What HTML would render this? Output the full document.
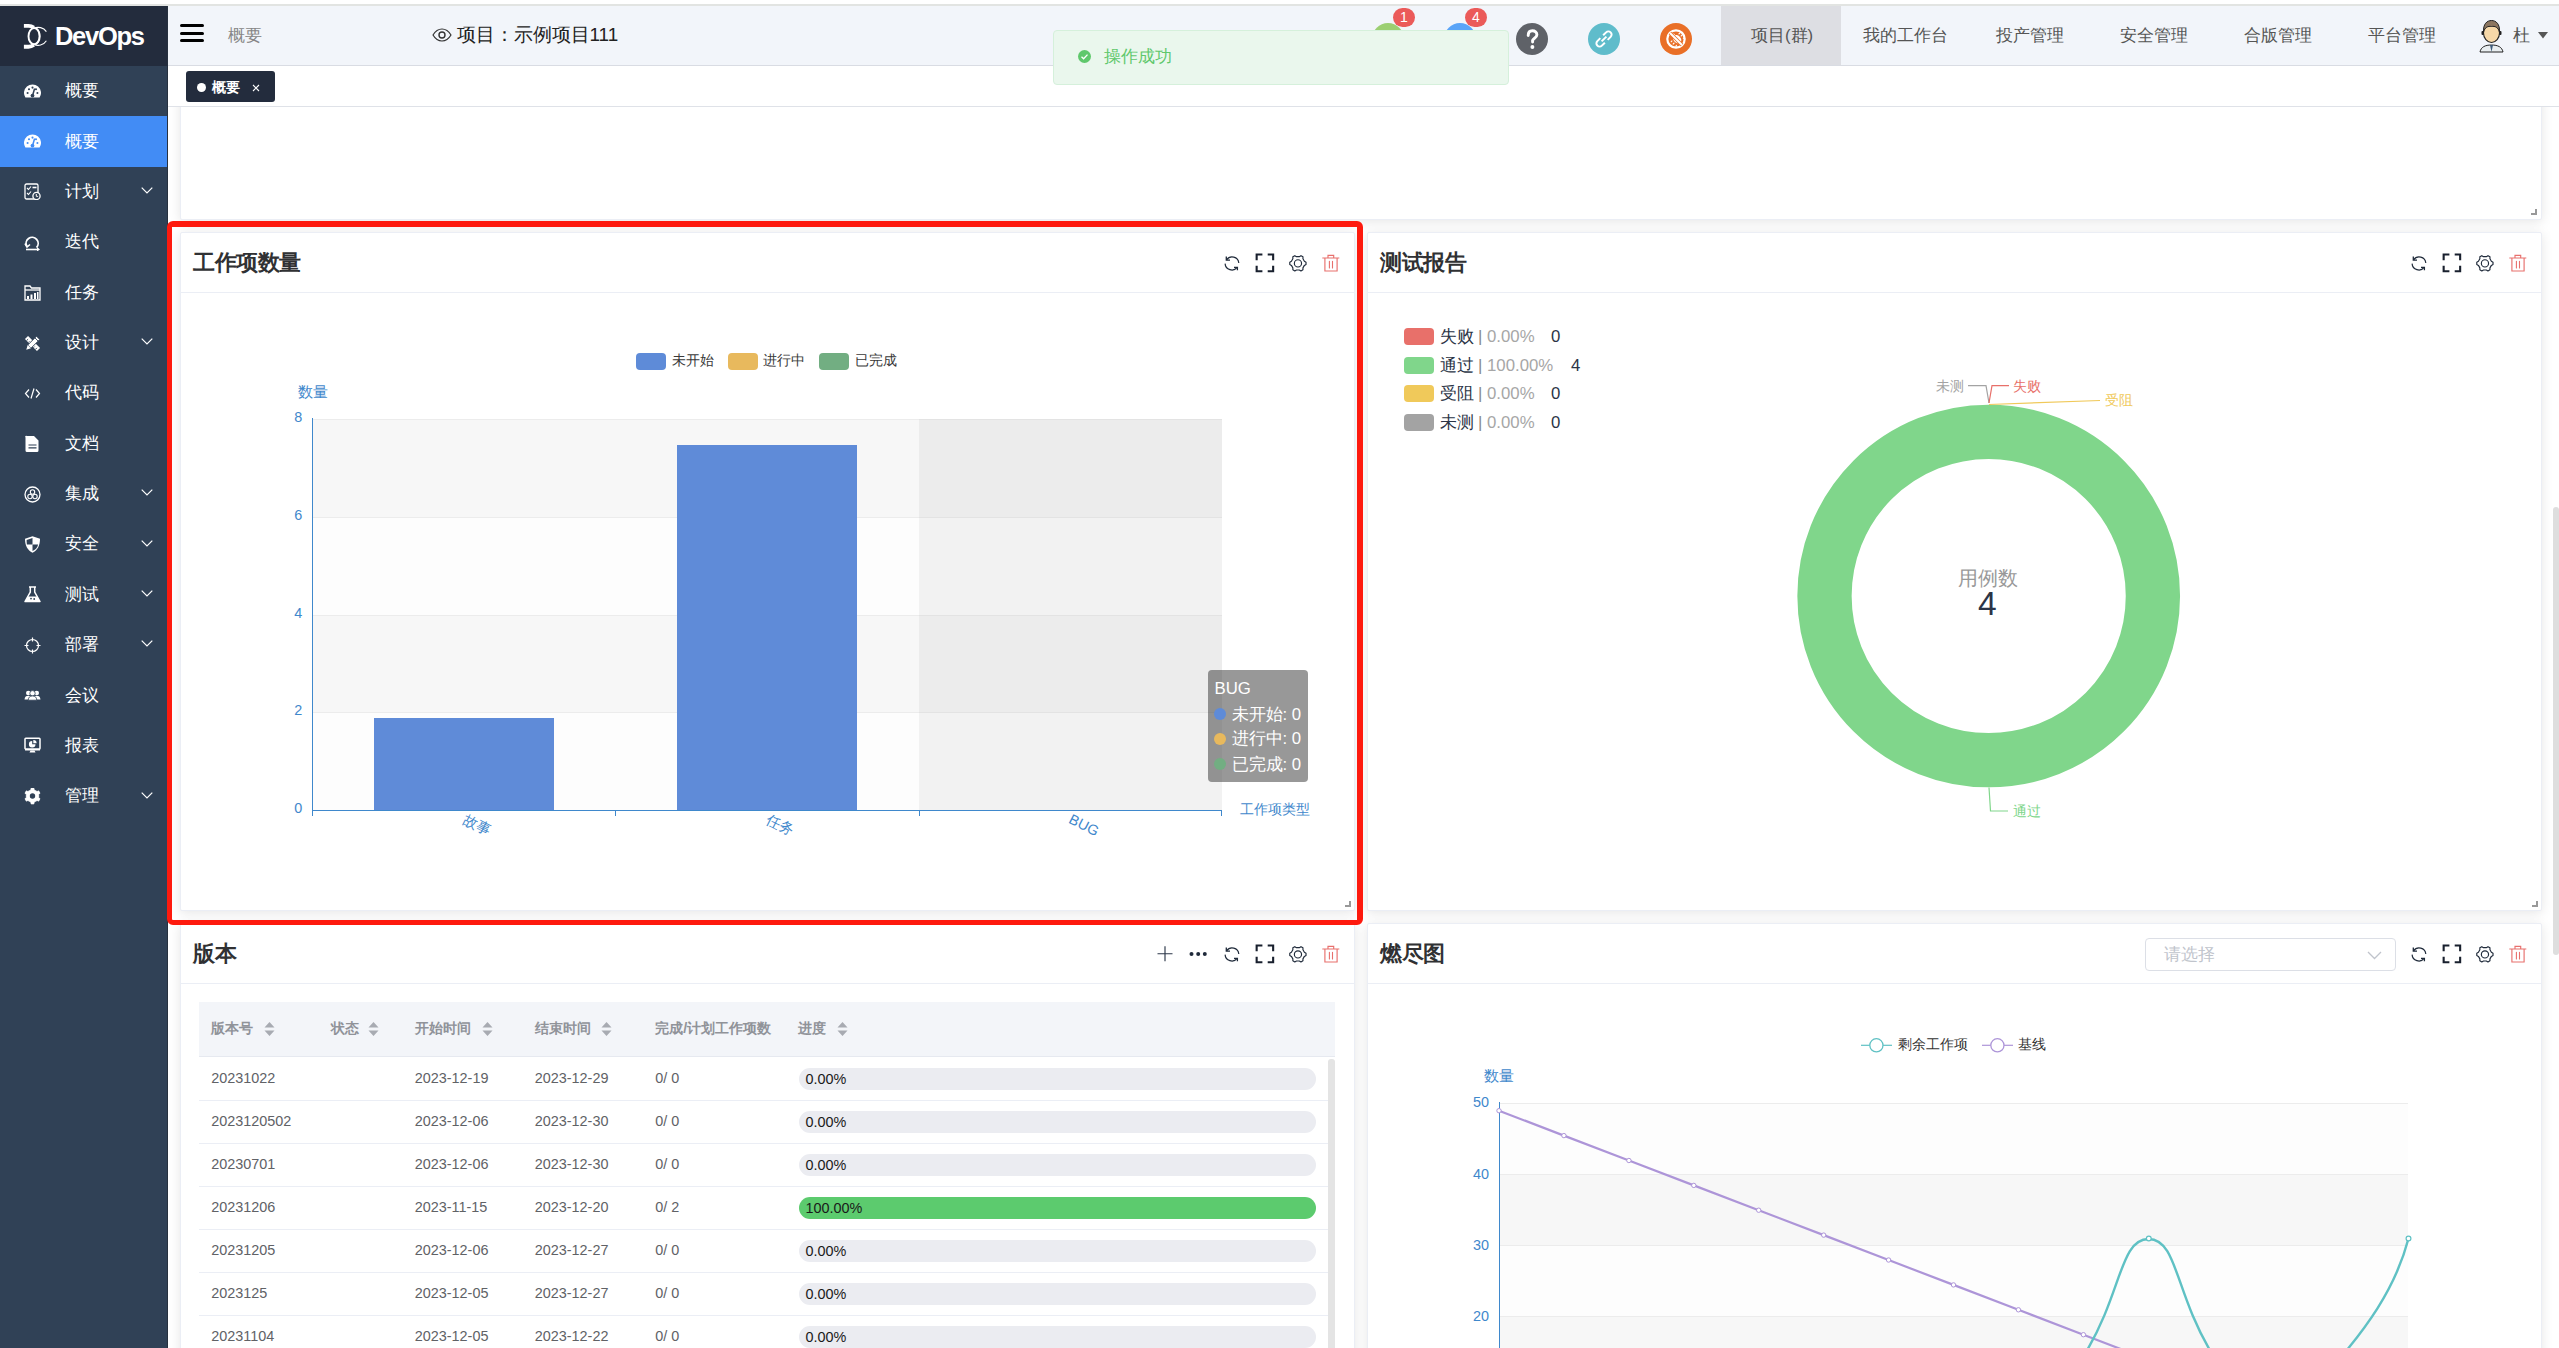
<!DOCTYPE html><html><head><meta charset="utf-8"><style>
*{box-sizing:border-box;margin:0;padding:0}
html,body{width:2559px;height:1348px;overflow:hidden;background:#fff;font-family:"Liberation Sans",sans-serif;}
.a{position:absolute;white-space:nowrap}
svg{display:block}
.card{position:absolute;background:#fff;border:1px solid #ebeef5;box-shadow:0 2px 12px 0 rgba(0,0,0,.1);border-radius:2px;overflow:hidden}
.chd{position:absolute;left:0;top:0;right:0;height:59px;border-bottom:1px solid #ebeef5}
.ttl{position:absolute;left:11px;top:0;line-height:58px;font-size:21.6px;font-weight:bold;color:#303133}
</style></head><body><div id="content"><div class="card" style="left:180px;top:60px;width:2362px;height:160px"></div>
<div class="a" style="left:2531px;top:209px;width:6px;height:6px;border-right:2px solid #999;border-bottom:2px solid #999"></div>
<div class="card" style="left:180px;top:232px;width:1175px;height:679px"></div>
<div class="a" style="left:181px;top:292px;width:1173px;height:1px;background:#ebeef5"></div>
<div class="a" style="left:193px;top:247.5px;line-height:30px;font-size:21.6px;color:#303133;font-weight:bold;letter-spacing:-0.5px">工作项数量</div>
<svg class="a" style="left:1223.5px;top:254.5px" width="16" height="17" viewBox="0 0 16 17"><path d="M2.6 4.9 A6.7 6.7 0 0 1 14.8 8" stroke="#1f2a3a" stroke-width="1.2" fill="none"/><path d="M2.3 1.6 V5.2 H6" stroke="#1f2a3a" stroke-width="1.3" fill="none"/><path d="M1.1 8.6 A6.8 6.8 0 0 0 13.2 12.4" stroke="#1f2a3a" stroke-width="1.2" fill="none"/><path d="M10 12.3 H13.4 V15.2" stroke="#1f2a3a" stroke-width="1.3" fill="none"/></svg>
<svg class="a" style="left:1254.5px;top:252.5px" width="20" height="20" viewBox="0 0 20 20"><path d="M1.65 7.2 V1.45 H7.4 M12.7 1.45 H18.15 V7.2 M18.15 12.8 V18.25 H12.7 M7.4 18.25 H1.65 V12.8" stroke="#19202e" stroke-width="2.1" fill="none"/></svg>
<svg class="a" style="left:1289px;top:253.5px" width="18" height="18" viewBox="0 0 18 18"><path d="M15.37 7.20 L17.02 8.16 L17.02 10.44 L15.37 11.40 L13.95 13.85 L13.95 15.76 L11.97 16.90 L10.31 15.95 L7.49 15.95 L5.83 16.90 L3.85 15.76 L3.85 13.85 L2.43 11.40 L0.78 10.44 L0.78 8.16 L2.43 7.20 L3.85 4.75 L3.85 2.84 L5.83 1.70 L7.49 2.65 L10.31 2.65 L11.97 1.70 L13.95 2.84 L13.95 4.75 Z" stroke="#1f2a3a" stroke-width="1.15" fill="none" stroke-linejoin="round"/><circle cx="8.95" cy="9.4" r="3.6" stroke="#1f2a3a" stroke-width="1.15" fill="none"/></svg>
<svg class="a" style="left:1322px;top:253.5px" width="18" height="18" viewBox="0 0 18 18"><path d="M0.3 4 H17.3 M6 3.8 V1.3 H11.7 V3.8 M2.9 4 V17 H15.1 V4" stroke="#e8706d" stroke-width="1.15" fill="none"/><path d="M7.4 7.2 V14 M10.5 7.2 V14" stroke="#e8706d" stroke-width="1.1" stroke-linecap="round" fill="none"/></svg>
<div class="a" style="left:1345px;top:901px;width:6px;height:6px;border-right:2px solid #999;border-bottom:2px solid #999"></div>
<div class="a" style="left:636.3px;top:353px;width:30px;height:16.5px;border-radius:4px;background:#5e8bd8"></div>
<div class="a" style="left:672px;top:349.7px;line-height:20px;font-size:14.4px;color:#3a3a3a;font-weight:normal;">未开始</div>
<div class="a" style="left:727.8px;top:353px;width:30px;height:16.5px;border-radius:4px;background:#e8b95d"></div>
<div class="a" style="left:763px;top:349.7px;line-height:20px;font-size:14.4px;color:#3a3a3a;font-weight:normal;">进行中</div>
<div class="a" style="left:819px;top:353px;width:30px;height:16.5px;border-radius:4px;background:#72ae82"></div>
<div class="a" style="left:855.3px;top:349.7px;line-height:20px;font-size:14.4px;color:#3a3a3a;font-weight:normal;">已完成</div>
<div class="a" style="left:298px;top:381.8px;line-height:21px;font-size:14.9px;color:#3f88cc;font-weight:normal;">数量</div>
<div class="a" style="left:313px;top:419px;width:909px;height:98px;background:#f7f7f7"></div>
<div class="a" style="left:313px;top:517px;width:909px;height:98px;background:#fdfdfd"></div>
<div class="a" style="left:313px;top:615px;width:909px;height:97.5px;background:#f7f7f7"></div>
<div class="a" style="left:313px;top:712.5px;width:909px;height:97.5px;background:#fdfdfd"></div>
<div class="a" style="left:313px;top:418.5px;width:909px;height:1px;background:#ececec"></div>
<div class="a" style="left:0px;top:406.8px;line-height:20px;font-size:14.4px;color:#3f88cc;font-weight:normal;width:302.3px;text-align:right">8</div>
<div class="a" style="left:313px;top:516.5px;width:909px;height:1px;background:#ececec"></div>
<div class="a" style="left:0px;top:504.8px;line-height:20px;font-size:14.4px;color:#3f88cc;font-weight:normal;width:302.3px;text-align:right">6</div>
<div class="a" style="left:313px;top:614.5px;width:909px;height:1px;background:#ececec"></div>
<div class="a" style="left:0px;top:602.8px;line-height:20px;font-size:14.4px;color:#3f88cc;font-weight:normal;width:302.3px;text-align:right">4</div>
<div class="a" style="left:313px;top:712.0px;width:909px;height:1px;background:#ececec"></div>
<div class="a" style="left:0px;top:700.3px;line-height:20px;font-size:14.4px;color:#3f88cc;font-weight:normal;width:302.3px;text-align:right">2</div>
<div class="a" style="left:0px;top:797.8px;line-height:20px;font-size:14.4px;color:#3f88cc;font-weight:normal;width:302.3px;text-align:right">0</div>
<div class="a" style="left:919px;top:419px;width:303px;height:391px;background:rgba(150,150,150,0.1)"></div>
<div class="a" style="left:374px;top:718.3px;width:180px;height:91.7px;background:#5f8bd8"></div>
<div class="a" style="left:677px;top:444.8px;width:180px;height:365.2px;background:#5f8bd8"></div>
<div class="a" style="left:312px;top:418px;width:1.2px;height:393px;background:#3f88cc"></div>
<div class="a" style="left:312px;top:809.5px;width:910px;height:1.2px;background:#3f88cc"></div>
<div class="a" style="left:312.0px;top:810px;width:1.2px;height:6px;background:#3f88cc"></div>
<div class="a" style="left:615.0px;top:810px;width:1.2px;height:6px;background:#3f88cc"></div>
<div class="a" style="left:918.5px;top:810px;width:1.2px;height:6px;background:#3f88cc"></div>
<div class="a" style="left:1221.0px;top:810px;width:1.2px;height:6px;background:#3f88cc"></div>
<div class="a" style="left:436.5px;top:815px;width:80px;line-height:20px;font-size:14.4px;color:#3f88cc;text-align:center;transform:rotate(27deg)">故事</div>
<div class="a" style="left:740px;top:815px;width:80px;line-height:20px;font-size:14.4px;color:#3f88cc;text-align:center;transform:rotate(27deg)">任务</div>
<div class="a" style="left:1044px;top:815px;width:80px;line-height:20px;font-size:14.4px;color:#3f88cc;text-align:center;transform:rotate(27deg)">BUG</div>
<div class="a" style="left:1240px;top:799.0px;line-height:20px;font-size:14.4px;color:#3f88cc;font-weight:normal;">工作项类型</div>
<div class="a" style="left:1208px;top:670px;width:100px;height:111.5px;border-radius:4px;background:rgba(50,50,50,0.5)"></div>
<div class="a" style="left:1214.5px;top:677.3px;line-height:24px;font-size:16.8px;color:#fff;font-weight:normal;">BUG</div>
<div class="a" style="left:1214px;top:708.2px;width:12px;height:12px;border-radius:50%;background:#5e8bd8"></div>
<div class="a" style="left:1231.5px;top:702.5px;line-height:24px;font-size:16.8px;color:#fff;font-weight:normal;">未开始: 0</div>
<div class="a" style="left:1214px;top:733.1px;width:12px;height:12px;border-radius:50%;background:#e8b95d"></div>
<div class="a" style="left:1231.5px;top:727.4px;line-height:24px;font-size:16.8px;color:#fff;font-weight:normal;">进行中: 0</div>
<div class="a" style="left:1214px;top:758.2px;width:12px;height:12px;border-radius:50%;background:#72ae82"></div>
<div class="a" style="left:1231.5px;top:752.5px;line-height:24px;font-size:16.8px;color:#fff;font-weight:normal;">已完成: 0</div>
<div class="card" style="left:1367px;top:232px;width:1175px;height:679px"></div>
<div class="a" style="left:1368px;top:292px;width:1173px;height:1px;background:#ebeef5"></div>
<div class="a" style="left:1380px;top:247.5px;line-height:30px;font-size:21.6px;color:#303133;font-weight:bold;letter-spacing:-0.5px">测试报告</div>
<svg class="a" style="left:2410.5px;top:254.5px" width="16" height="17" viewBox="0 0 16 17"><path d="M2.6 4.9 A6.7 6.7 0 0 1 14.8 8" stroke="#1f2a3a" stroke-width="1.2" fill="none"/><path d="M2.3 1.6 V5.2 H6" stroke="#1f2a3a" stroke-width="1.3" fill="none"/><path d="M1.1 8.6 A6.8 6.8 0 0 0 13.2 12.4" stroke="#1f2a3a" stroke-width="1.2" fill="none"/><path d="M10 12.3 H13.4 V15.2" stroke="#1f2a3a" stroke-width="1.3" fill="none"/></svg>
<svg class="a" style="left:2441.5px;top:252.5px" width="20" height="20" viewBox="0 0 20 20"><path d="M1.65 7.2 V1.45 H7.4 M12.7 1.45 H18.15 V7.2 M18.15 12.8 V18.25 H12.7 M7.4 18.25 H1.65 V12.8" stroke="#19202e" stroke-width="2.1" fill="none"/></svg>
<svg class="a" style="left:2476px;top:253.5px" width="18" height="18" viewBox="0 0 18 18"><path d="M15.37 7.20 L17.02 8.16 L17.02 10.44 L15.37 11.40 L13.95 13.85 L13.95 15.76 L11.97 16.90 L10.31 15.95 L7.49 15.95 L5.83 16.90 L3.85 15.76 L3.85 13.85 L2.43 11.40 L0.78 10.44 L0.78 8.16 L2.43 7.20 L3.85 4.75 L3.85 2.84 L5.83 1.70 L7.49 2.65 L10.31 2.65 L11.97 1.70 L13.95 2.84 L13.95 4.75 Z" stroke="#1f2a3a" stroke-width="1.15" fill="none" stroke-linejoin="round"/><circle cx="8.95" cy="9.4" r="3.6" stroke="#1f2a3a" stroke-width="1.15" fill="none"/></svg>
<svg class="a" style="left:2509px;top:253.5px" width="18" height="18" viewBox="0 0 18 18"><path d="M0.3 4 H17.3 M6 3.8 V1.3 H11.7 V3.8 M2.9 4 V17 H15.1 V4" stroke="#e8706d" stroke-width="1.15" fill="none"/><path d="M7.4 7.2 V14 M10.5 7.2 V14" stroke="#e8706d" stroke-width="1.1" stroke-linecap="round" fill="none"/></svg>
<div class="a" style="left:2532px;top:901px;width:6px;height:6px;border-right:2px solid #999;border-bottom:2px solid #999"></div>
<div class="a" style="left:1403.5px;top:328.3px;width:30px;height:17px;border-radius:4px;background:#e8706a"></div>
<div class="a" style="left:1440px;top:324.8px;line-height:24px;font-size:16.8px;color:#2b3446;font-weight:normal;">失败</div>
<div class="a" style="left:1478px;top:324.8px;line-height:24px;font-size:16.8px;color:#a6a6a6;font-weight:normal;"><span style="color:#888">|</span> 0.00%</div>
<div class="a" style="left:1551px;top:324.8px;line-height:24px;font-size:16.8px;color:#2b3446;font-weight:normal;">0</div>
<div class="a" style="left:1403.5px;top:357.3px;width:30px;height:17px;border-radius:4px;background:#80d68b"></div>
<div class="a" style="left:1440px;top:353.8px;line-height:24px;font-size:16.8px;color:#2b3446;font-weight:normal;">通过</div>
<div class="a" style="left:1478px;top:353.8px;line-height:24px;font-size:16.8px;color:#a6a6a6;font-weight:normal;"><span style="color:#888">|</span> 100.00%</div>
<div class="a" style="left:1571px;top:353.8px;line-height:24px;font-size:16.8px;color:#2b3446;font-weight:normal;">4</div>
<div class="a" style="left:1403.5px;top:385.3px;width:30px;height:17px;border-radius:4px;background:#f0c95a"></div>
<div class="a" style="left:1440px;top:381.8px;line-height:24px;font-size:16.8px;color:#2b3446;font-weight:normal;">受阻</div>
<div class="a" style="left:1478px;top:381.8px;line-height:24px;font-size:16.8px;color:#a6a6a6;font-weight:normal;"><span style="color:#888">|</span> 0.00%</div>
<div class="a" style="left:1551px;top:381.8px;line-height:24px;font-size:16.8px;color:#2b3446;font-weight:normal;">0</div>
<div class="a" style="left:1403.5px;top:414.3px;width:30px;height:17px;border-radius:4px;background:#a3a3a3"></div>
<div class="a" style="left:1440px;top:410.8px;line-height:24px;font-size:16.8px;color:#2b3446;font-weight:normal;">未测</div>
<div class="a" style="left:1478px;top:410.8px;line-height:24px;font-size:16.8px;color:#a6a6a6;font-weight:normal;"><span style="color:#888">|</span> 0.00%</div>
<div class="a" style="left:1551px;top:410.8px;line-height:24px;font-size:16.8px;color:#2b3446;font-weight:normal;">0</div>
<svg class="a" style="left:1768px;top:375px" width="441" height="450" viewBox="1768 375 441 450"><circle cx="1988.7" cy="596" r="164.2" stroke="#80d68b" stroke-width="54.3" fill="none"/><path d="M1968 385.6 H1986 L1989 403" stroke="#a3a3a3" stroke-width="1.2" fill="none"/><path d="M2009 385.6 H1992 L1989 403" stroke="#e8706a" stroke-width="1.2" fill="none"/><path d="M1989 404.5 L2100 400.5" stroke="#f0c95a" stroke-width="1.2" fill="none"/><path d="M1989 787.5 L1990.5 811 H2008" stroke="#80d68b" stroke-width="1.2" fill="none"/></svg>
<div class="a" style="left:1936px;top:375.6px;line-height:20px;font-size:14.4px;color:#a3a3a3;font-weight:normal;">未测</div>
<div class="a" style="left:2012.5px;top:375.6px;line-height:20px;font-size:14.4px;color:#e8706a;font-weight:normal;">失败</div>
<div class="a" style="left:2105px;top:390.0px;line-height:20px;font-size:14.4px;color:#f0c95a;font-weight:normal;">受阻</div>
<div class="a" style="left:2012.5px;top:801.4px;line-height:20px;font-size:14.4px;color:#80d68b;font-weight:normal;">通过</div>
<div class="a" style="left:1957.5px;top:563.5px;line-height:29px;font-size:20.4px;color:#999;font-weight:normal;">用例数</div>
<div class="a" style="left:1978px;top:579.5px;line-height:47px;font-size:33.6px;color:#2b3447;font-weight:normal;">4</div>
<div class="card" style="left:180px;top:923px;width:1175px;height:477px"></div>
<div class="a" style="left:181px;top:983px;width:1173px;height:1px;background:#ebeef5"></div>
<div class="a" style="left:193px;top:938.5px;line-height:30px;font-size:21.6px;color:#303133;font-weight:bold;letter-spacing:-0.5px">版本</div>
<svg class="a" style="left:1223.5px;top:946px" width="16" height="17" viewBox="0 0 16 17"><path d="M2.6 4.9 A6.7 6.7 0 0 1 14.8 8" stroke="#1f2a3a" stroke-width="1.2" fill="none"/><path d="M2.3 1.6 V5.2 H6" stroke="#1f2a3a" stroke-width="1.3" fill="none"/><path d="M1.1 8.6 A6.8 6.8 0 0 0 13.2 12.4" stroke="#1f2a3a" stroke-width="1.2" fill="none"/><path d="M10 12.3 H13.4 V15.2" stroke="#1f2a3a" stroke-width="1.3" fill="none"/></svg>
<svg class="a" style="left:1254.5px;top:944px" width="20" height="20" viewBox="0 0 20 20"><path d="M1.65 7.2 V1.45 H7.4 M12.7 1.45 H18.15 V7.2 M18.15 12.8 V18.25 H12.7 M7.4 18.25 H1.65 V12.8" stroke="#19202e" stroke-width="2.1" fill="none"/></svg>
<svg class="a" style="left:1289px;top:945px" width="18" height="18" viewBox="0 0 18 18"><path d="M15.37 7.20 L17.02 8.16 L17.02 10.44 L15.37 11.40 L13.95 13.85 L13.95 15.76 L11.97 16.90 L10.31 15.95 L7.49 15.95 L5.83 16.90 L3.85 15.76 L3.85 13.85 L2.43 11.40 L0.78 10.44 L0.78 8.16 L2.43 7.20 L3.85 4.75 L3.85 2.84 L5.83 1.70 L7.49 2.65 L10.31 2.65 L11.97 1.70 L13.95 2.84 L13.95 4.75 Z" stroke="#1f2a3a" stroke-width="1.15" fill="none" stroke-linejoin="round"/><circle cx="8.95" cy="9.4" r="3.6" stroke="#1f2a3a" stroke-width="1.15" fill="none"/></svg>
<svg class="a" style="left:1322px;top:945px" width="18" height="18" viewBox="0 0 18 18"><path d="M0.3 4 H17.3 M6 3.8 V1.3 H11.7 V3.8 M2.9 4 V17 H15.1 V4" stroke="#e8706d" stroke-width="1.15" fill="none"/><path d="M7.4 7.2 V14 M10.5 7.2 V14" stroke="#e8706d" stroke-width="1.1" stroke-linecap="round" fill="none"/></svg>
<svg class="a" style="left:1156px;top:945px" width="18" height="18" viewBox="0 0 18 18"><path d="M9 1.3 V16.3 M1.5 8.7 H16.5" stroke="#2c3749" stroke-width="1.15"/></svg>
<svg class="a" style="left:1189px;top:951px" width="18" height="6" viewBox="0 0 18 6"><circle cx="2.5" cy="3" r="2" fill="#1f2a3a"/><circle cx="9.2" cy="3" r="2" fill="#1f2a3a"/><circle cx="15.8" cy="3" r="2" fill="#1f2a3a"/></svg>
<div class="a" style="left:199px;top:1002px;width:1136px;height:55px;background:#f3f5f9;border-bottom:1px solid #e6e9f0"></div>
<div class="a" style="left:211.3px;top:1017.5px;line-height:20px;font-size:14.4px;color:#909399;font-weight:bold;">版本号</div>
<svg class="a" style="left:263.5px;top:1020.5px" width="11" height="16" viewBox="0 0 11 16"><path d="M5.5 1 L10.5 6.5 H0.5Z M5.5 15 L10.5 9.5 H0.5Z" fill="#a8abb2"/></svg>
<div class="a" style="left:330.8px;top:1017.5px;line-height:20px;font-size:14.4px;color:#909399;font-weight:bold;">状态</div>
<svg class="a" style="left:368px;top:1020.5px" width="11" height="16" viewBox="0 0 11 16"><path d="M5.5 1 L10.5 6.5 H0.5Z M5.5 15 L10.5 9.5 H0.5Z" fill="#a8abb2"/></svg>
<div class="a" style="left:414.8px;top:1017.5px;line-height:20px;font-size:14.4px;color:#909399;font-weight:bold;">开始时间</div>
<svg class="a" style="left:481.5px;top:1020.5px" width="11" height="16" viewBox="0 0 11 16"><path d="M5.5 1 L10.5 6.5 H0.5Z M5.5 15 L10.5 9.5 H0.5Z" fill="#a8abb2"/></svg>
<div class="a" style="left:534.8px;top:1017.5px;line-height:20px;font-size:14.4px;color:#909399;font-weight:bold;">结束时间</div>
<svg class="a" style="left:601px;top:1020.5px" width="11" height="16" viewBox="0 0 11 16"><path d="M5.5 1 L10.5 6.5 H0.5Z M5.5 15 L10.5 9.5 H0.5Z" fill="#a8abb2"/></svg>
<div class="a" style="left:655.3px;top:1017.5px;line-height:20px;font-size:14.4px;color:#909399;font-weight:bold;">完成/计划工作项数</div>
<div class="a" style="left:798.4px;top:1017.5px;line-height:20px;font-size:14.4px;color:#909399;font-weight:bold;">进度</div>
<svg class="a" style="left:836.5px;top:1020.5px" width="11" height="16" viewBox="0 0 11 16"><path d="M5.5 1 L10.5 6.5 H0.5Z M5.5 15 L10.5 9.5 H0.5Z" fill="#a8abb2"/></svg>
<div class="a" style="left:211.3px;top:1068.0px;line-height:20px;font-size:14.4px;color:#606266;font-weight:normal;">20231022</div>
<div class="a" style="left:414.8px;top:1068.0px;line-height:20px;font-size:14.4px;color:#606266;font-weight:normal;">2023-12-19</div>
<div class="a" style="left:534.8px;top:1068.0px;line-height:20px;font-size:14.4px;color:#606266;font-weight:normal;">2023-12-29</div>
<div class="a" style="left:655.3px;top:1068.0px;line-height:20px;font-size:14.4px;color:#606266;font-weight:normal;">0/ 0</div>
<div class="a" style="left:799px;top:1068px;width:517px;height:22px;border-radius:11px;background:#ebecf1"></div>
<div class="a" style="left:805.5px;top:1069.0px;line-height:20px;font-size:14.4px;color:#1a1a1a;font-weight:normal;">0.00%</div>
<div class="a" style="left:199px;top:1099.5px;width:1129px;height:1px;background:#ebeef5"></div>
<div class="a" style="left:211.3px;top:1111.0px;line-height:20px;font-size:14.4px;color:#606266;font-weight:normal;">2023120502</div>
<div class="a" style="left:414.8px;top:1111.0px;line-height:20px;font-size:14.4px;color:#606266;font-weight:normal;">2023-12-06</div>
<div class="a" style="left:534.8px;top:1111.0px;line-height:20px;font-size:14.4px;color:#606266;font-weight:normal;">2023-12-30</div>
<div class="a" style="left:655.3px;top:1111.0px;line-height:20px;font-size:14.4px;color:#606266;font-weight:normal;">0/ 0</div>
<div class="a" style="left:799px;top:1111px;width:517px;height:22px;border-radius:11px;background:#ebecf1"></div>
<div class="a" style="left:805.5px;top:1112.0px;line-height:20px;font-size:14.4px;color:#1a1a1a;font-weight:normal;">0.00%</div>
<div class="a" style="left:199px;top:1142.5px;width:1129px;height:1px;background:#ebeef5"></div>
<div class="a" style="left:211.3px;top:1154.0px;line-height:20px;font-size:14.4px;color:#606266;font-weight:normal;">20230701</div>
<div class="a" style="left:414.8px;top:1154.0px;line-height:20px;font-size:14.4px;color:#606266;font-weight:normal;">2023-12-06</div>
<div class="a" style="left:534.8px;top:1154.0px;line-height:20px;font-size:14.4px;color:#606266;font-weight:normal;">2023-12-30</div>
<div class="a" style="left:655.3px;top:1154.0px;line-height:20px;font-size:14.4px;color:#606266;font-weight:normal;">0/ 0</div>
<div class="a" style="left:799px;top:1154px;width:517px;height:22px;border-radius:11px;background:#ebecf1"></div>
<div class="a" style="left:805.5px;top:1155.0px;line-height:20px;font-size:14.4px;color:#1a1a1a;font-weight:normal;">0.00%</div>
<div class="a" style="left:199px;top:1185.5px;width:1129px;height:1px;background:#ebeef5"></div>
<div class="a" style="left:211.3px;top:1197.0px;line-height:20px;font-size:14.4px;color:#606266;font-weight:normal;">20231206</div>
<div class="a" style="left:414.8px;top:1197.0px;line-height:20px;font-size:14.4px;color:#606266;font-weight:normal;">2023-11-15</div>
<div class="a" style="left:534.8px;top:1197.0px;line-height:20px;font-size:14.4px;color:#606266;font-weight:normal;">2023-12-20</div>
<div class="a" style="left:655.3px;top:1197.0px;line-height:20px;font-size:14.4px;color:#606266;font-weight:normal;">0/ 2</div>
<div class="a" style="left:799px;top:1197px;width:517px;height:22px;border-radius:11px;background:#5ccb6e"></div>
<div class="a" style="left:805.5px;top:1198.0px;line-height:20px;font-size:14.4px;color:#1a1a1a;font-weight:normal;">100.00%</div>
<div class="a" style="left:199px;top:1228.5px;width:1129px;height:1px;background:#ebeef5"></div>
<div class="a" style="left:211.3px;top:1240.0px;line-height:20px;font-size:14.4px;color:#606266;font-weight:normal;">20231205</div>
<div class="a" style="left:414.8px;top:1240.0px;line-height:20px;font-size:14.4px;color:#606266;font-weight:normal;">2023-12-06</div>
<div class="a" style="left:534.8px;top:1240.0px;line-height:20px;font-size:14.4px;color:#606266;font-weight:normal;">2023-12-27</div>
<div class="a" style="left:655.3px;top:1240.0px;line-height:20px;font-size:14.4px;color:#606266;font-weight:normal;">0/ 0</div>
<div class="a" style="left:799px;top:1240px;width:517px;height:22px;border-radius:11px;background:#ebecf1"></div>
<div class="a" style="left:805.5px;top:1241.0px;line-height:20px;font-size:14.4px;color:#1a1a1a;font-weight:normal;">0.00%</div>
<div class="a" style="left:199px;top:1271.5px;width:1129px;height:1px;background:#ebeef5"></div>
<div class="a" style="left:211.3px;top:1283.0px;line-height:20px;font-size:14.4px;color:#606266;font-weight:normal;">2023125</div>
<div class="a" style="left:414.8px;top:1283.0px;line-height:20px;font-size:14.4px;color:#606266;font-weight:normal;">2023-12-05</div>
<div class="a" style="left:534.8px;top:1283.0px;line-height:20px;font-size:14.4px;color:#606266;font-weight:normal;">2023-12-27</div>
<div class="a" style="left:655.3px;top:1283.0px;line-height:20px;font-size:14.4px;color:#606266;font-weight:normal;">0/ 0</div>
<div class="a" style="left:799px;top:1283px;width:517px;height:22px;border-radius:11px;background:#ebecf1"></div>
<div class="a" style="left:805.5px;top:1284.0px;line-height:20px;font-size:14.4px;color:#1a1a1a;font-weight:normal;">0.00%</div>
<div class="a" style="left:199px;top:1314.5px;width:1129px;height:1px;background:#ebeef5"></div>
<div class="a" style="left:211.3px;top:1326.0px;line-height:20px;font-size:14.4px;color:#606266;font-weight:normal;">20231104</div>
<div class="a" style="left:414.8px;top:1326.0px;line-height:20px;font-size:14.4px;color:#606266;font-weight:normal;">2023-12-05</div>
<div class="a" style="left:534.8px;top:1326.0px;line-height:20px;font-size:14.4px;color:#606266;font-weight:normal;">2023-12-22</div>
<div class="a" style="left:655.3px;top:1326.0px;line-height:20px;font-size:14.4px;color:#606266;font-weight:normal;">0/ 0</div>
<div class="a" style="left:799px;top:1326px;width:517px;height:22px;border-radius:11px;background:#ebecf1"></div>
<div class="a" style="left:805.5px;top:1327.0px;line-height:20px;font-size:14.4px;color:#1a1a1a;font-weight:normal;">0.00%</div>
<div class="a" style="left:1328px;top:1059px;width:7px;height:300px;border-radius:3px;background:#e4e4e4"></div>
<div class="card" style="left:1367px;top:923px;width:1175px;height:477px"></div>
<div class="a" style="left:1368px;top:983px;width:1173px;height:1px;background:#ebeef5"></div>
<div class="a" style="left:1380px;top:938.5px;line-height:30px;font-size:21.6px;color:#303133;font-weight:bold;letter-spacing:-0.5px">燃尽图</div>
<svg class="a" style="left:2410.5px;top:946px" width="16" height="17" viewBox="0 0 16 17"><path d="M2.6 4.9 A6.7 6.7 0 0 1 14.8 8" stroke="#1f2a3a" stroke-width="1.2" fill="none"/><path d="M2.3 1.6 V5.2 H6" stroke="#1f2a3a" stroke-width="1.3" fill="none"/><path d="M1.1 8.6 A6.8 6.8 0 0 0 13.2 12.4" stroke="#1f2a3a" stroke-width="1.2" fill="none"/><path d="M10 12.3 H13.4 V15.2" stroke="#1f2a3a" stroke-width="1.3" fill="none"/></svg>
<svg class="a" style="left:2441.5px;top:944px" width="20" height="20" viewBox="0 0 20 20"><path d="M1.65 7.2 V1.45 H7.4 M12.7 1.45 H18.15 V7.2 M18.15 12.8 V18.25 H12.7 M7.4 18.25 H1.65 V12.8" stroke="#19202e" stroke-width="2.1" fill="none"/></svg>
<svg class="a" style="left:2476px;top:945px" width="18" height="18" viewBox="0 0 18 18"><path d="M15.37 7.20 L17.02 8.16 L17.02 10.44 L15.37 11.40 L13.95 13.85 L13.95 15.76 L11.97 16.90 L10.31 15.95 L7.49 15.95 L5.83 16.90 L3.85 15.76 L3.85 13.85 L2.43 11.40 L0.78 10.44 L0.78 8.16 L2.43 7.20 L3.85 4.75 L3.85 2.84 L5.83 1.70 L7.49 2.65 L10.31 2.65 L11.97 1.70 L13.95 2.84 L13.95 4.75 Z" stroke="#1f2a3a" stroke-width="1.15" fill="none" stroke-linejoin="round"/><circle cx="8.95" cy="9.4" r="3.6" stroke="#1f2a3a" stroke-width="1.15" fill="none"/></svg>
<svg class="a" style="left:2509px;top:945px" width="18" height="18" viewBox="0 0 18 18"><path d="M0.3 4 H17.3 M6 3.8 V1.3 H11.7 V3.8 M2.9 4 V17 H15.1 V4" stroke="#e8706d" stroke-width="1.15" fill="none"/><path d="M7.4 7.2 V14 M10.5 7.2 V14" stroke="#e8706d" stroke-width="1.1" stroke-linecap="round" fill="none"/></svg>
<div class="a" style="left:2145px;top:937.5px;width:251px;height:33px;border:1px solid #dcdfe6;border-radius:4px;background:#fff"></div>
<div class="a" style="left:2164px;top:943.0px;line-height:24px;font-size:16.8px;color:#c0c4cc;font-weight:normal;">请选择</div>
<svg class="a" style="left:2367px;top:951px" width="15" height="9" viewBox="0 0 15 9"><path d="M1 1 L7.5 7.5 L14 1" stroke="#c0c4cc" stroke-width="1.3" fill="none"/></svg>
<svg class="a" style="left:1861px;top:1037px" width="31" height="16" viewBox="0 0 31 16"><path d="M0 8.3 H31" stroke="#5fc1c4" stroke-width="1.2"/><circle cx="15.4" cy="8.3" r="6.6" stroke="#5fc1c4" stroke-width="1.3" fill="#fff"/></svg>
<div class="a" style="left:1897.5px;top:1034.3px;line-height:20px;font-size:14.4px;color:#333;font-weight:normal;">剩余工作项</div>
<svg class="a" style="left:1982px;top:1037px" width="31" height="16" viewBox="0 0 31 16"><path d="M0 8.3 H31" stroke="#ad95d8" stroke-width="1.2"/><circle cx="15.4" cy="8.3" r="6.6" stroke="#ad95d8" stroke-width="1.3" fill="#fff"/></svg>
<div class="a" style="left:2018.4px;top:1034.3px;line-height:20px;font-size:14.4px;color:#333;font-weight:normal;">基线</div>
<div class="a" style="left:1484px;top:1066.0px;line-height:21px;font-size:14.9px;color:#3f88cc;font-weight:normal;">数量</div>
<div class="a" style="left:1499px;top:1103.6px;width:909px;height:71.1px;background:#fdfdfd"></div>
<div class="a" style="left:1499px;top:1174.7px;width:909px;height:71.1px;background:#f7f7f7"></div>
<div class="a" style="left:1499px;top:1245.8px;width:909px;height:71.1px;background:#fdfdfd"></div>
<div class="a" style="left:1499px;top:1316.9px;width:909px;height:71.1px;background:#f7f7f7"></div>
<div class="a" style="left:1499px;top:1103.1px;width:909px;height:1px;background:#ececec"></div>
<div class="a" style="left:0px;top:1092.4px;line-height:20px;font-size:14.4px;color:#3f88cc;font-weight:normal;width:1489px;text-align:right">50</div>
<div class="a" style="left:1499px;top:1174.2px;width:909px;height:1px;background:#ececec"></div>
<div class="a" style="left:0px;top:1163.5px;line-height:20px;font-size:14.4px;color:#3f88cc;font-weight:normal;width:1489px;text-align:right">40</div>
<div class="a" style="left:1499px;top:1245.3px;width:909px;height:1px;background:#ececec"></div>
<div class="a" style="left:0px;top:1234.6px;line-height:20px;font-size:14.4px;color:#3f88cc;font-weight:normal;width:1489px;text-align:right">30</div>
<div class="a" style="left:1499px;top:1316.4px;width:909px;height:1px;background:#ececec"></div>
<div class="a" style="left:0px;top:1305.7px;line-height:20px;font-size:14.4px;color:#3f88cc;font-weight:normal;width:1489px;text-align:right">20</div>
<div class="a" style="left:1498.5px;top:1102px;width:1.2px;height:260px;background:#3f88cc"></div>
<svg class="a" style="left:1368px;top:1090px" width="1173" height="258" viewBox="1368 1090 1173 258"><path d="M1499.0 1110.7 L1563.9 1135.6 L1628.9 1160.5 L1693.8 1185.4 L1758.7 1210.2 L1823.7 1235.1 L1888.6 1260.0 L1953.5 1284.9 L2018.4 1309.8 L2083.4 1334.7 L2148.3 1359.6 L2213.2 1384.4 L2278.2 1409.3 L2343.1 1434.2 L2408.0 1459.1" stroke="#ad95d8" stroke-width="2.2" fill="none"/><circle cx="1499.0" cy="1110.7" r="2.2" stroke="#ad95d8" stroke-width="1" fill="#fff"/><circle cx="1563.9" cy="1135.6" r="2.2" stroke="#ad95d8" stroke-width="1" fill="#fff"/><circle cx="1628.9" cy="1160.5" r="2.2" stroke="#ad95d8" stroke-width="1" fill="#fff"/><circle cx="1693.8" cy="1185.4" r="2.2" stroke="#ad95d8" stroke-width="1" fill="#fff"/><circle cx="1758.7" cy="1210.2" r="2.2" stroke="#ad95d8" stroke-width="1" fill="#fff"/><circle cx="1823.7" cy="1235.1" r="2.2" stroke="#ad95d8" stroke-width="1" fill="#fff"/><circle cx="1888.6" cy="1260.0" r="2.2" stroke="#ad95d8" stroke-width="1" fill="#fff"/><circle cx="1953.5" cy="1284.9" r="2.2" stroke="#ad95d8" stroke-width="1" fill="#fff"/><circle cx="2018.4" cy="1309.8" r="2.2" stroke="#ad95d8" stroke-width="1" fill="#fff"/><circle cx="2083.4" cy="1334.7" r="2.2" stroke="#ad95d8" stroke-width="1" fill="#fff"/><circle cx="2148.3" cy="1359.6" r="2.2" stroke="#ad95d8" stroke-width="1" fill="#fff"/><circle cx="2213.2" cy="1384.4" r="2.2" stroke="#ad95d8" stroke-width="1" fill="#fff"/><circle cx="2278.2" cy="1409.3" r="2.2" stroke="#ad95d8" stroke-width="1" fill="#fff"/><circle cx="2343.1" cy="1434.2" r="2.2" stroke="#ad95d8" stroke-width="1" fill="#fff"/><circle cx="2408.0" cy="1459.1" r="2.2" stroke="#ad95d8" stroke-width="1" fill="#fff"/><path d="M2086 1352 C2122 1292 2120 1239 2148.6 1239 C2177 1239 2175 1292 2211 1352 M2330 1370 C2365 1330 2395 1290 2408.5 1238.5" stroke="#5fc1c4" stroke-width="2.4" fill="none"/><circle cx="2148.8" cy="1238.5" r="2.4" stroke="#5fc1c4" stroke-width="1.2" fill="#fff"/><circle cx="2408.5" cy="1238.5" r="2.4" stroke="#5fc1c4" stroke-width="1.2" fill="#fff"/></svg>
<div class="a" style="left:2553px;top:507px;width:6px;height:448px;border-radius:3px;background:#dedede"></div></div>
<div class="a" style="left:0;top:4px;width:2559px;height:2px;background:#e2e4e2"></div>
<div class="a" style="left:0;top:6px;width:168px;height:1342px;background:#304156"></div>
<div class="a" style="left:167px;top:6px;width:1px;height:1342px;background:#27313f"></div>
<div class="a" style="left:0;top:6px;width:167px;height:60px;background:#232c3d"></div>
<svg class="a" style="left:23px;top:23px" width="25" height="27" viewBox="0 0 25 27">
<path d="M0.9 2.85 H5.5 C7.5 2.85 9 3.3 10.8 4.6" stroke="#fff" stroke-width="3.9" fill="none"/>
<path d="M0.9 23.75 H5.5 C7.5 23.75 9 23.3 10.8 22" stroke="#fff" stroke-width="3.9" fill="none"/>
<ellipse cx="11.1" cy="13.15" rx="5.6" ry="8.1" stroke="#fff" stroke-width="1.9" fill="none"/>
<path d="M13.6 5.6 C17.6 9 17.6 17.5 13.2 21" stroke="#fff" stroke-width="1.4" fill="none"/>
<path d="M23.4 8.6 C20.5 4.4 15 3.4 11 5.2" stroke="#fff" stroke-width="1.1" fill="none"/>
<path d="M23.4 17.8 C20.5 22.4 15 23.4 11 21.4" stroke="#fff" stroke-width="1.1" fill="none"/>
</svg>
<div class="a" style="left:55px;top:20.5px;font-size:25.5px;font-weight:bold;color:#fff;line-height:30px;letter-spacing:-1.3px">DevOps</div>
<svg class="a" style="left:24px;top:83.50px" width="17" height="17" viewBox="0 0 17 17"><path d="M1.4 13.6 A8.5 8.5 0 1 1 15.6 13.6 Z" fill="#fff"/><circle cx="3.6" cy="9" r="1.05" fill="#304156"/><circle cx="5" cy="5.3" r="1.05" fill="#304156"/><circle cx="8.5" cy="3.6" r="1.05" fill="#304156"/><circle cx="12" cy="5.3" r="1.05" fill="#304156"/><circle cx="13.4" cy="9" r="1.05" fill="#304156"/><path d="M10.6 4.5 L8.9 10.5" stroke="#304156" stroke-width="1.5"/><circle cx="8.5" cy="11.6" r="1.9" fill="#304156"/></svg>
<div class="a" style="left:65px;top:79.2px;line-height:24px;font-size:16.8px;color:#fff;font-weight:normal;">概要</div>
<div class="a" style="left:0;top:116.36px;width:167px;height:50.4px;background:#428cf5"></div>
<svg class="a" style="left:24px;top:133.86px" width="17" height="17" viewBox="0 0 17 17"><path d="M1.4 13.6 A8.5 8.5 0 1 1 15.6 13.6 Z" fill="#fff"/><circle cx="3.6" cy="9" r="1.05" fill="#428cf5"/><circle cx="5" cy="5.3" r="1.05" fill="#428cf5"/><circle cx="8.5" cy="3.6" r="1.05" fill="#428cf5"/><circle cx="12" cy="5.3" r="1.05" fill="#428cf5"/><circle cx="13.4" cy="9" r="1.05" fill="#428cf5"/><path d="M10.6 4.5 L8.9 10.5" stroke="#428cf5" stroke-width="1.5"/><circle cx="8.5" cy="11.6" r="1.9" fill="#428cf5"/></svg>
<div class="a" style="left:65px;top:129.6px;line-height:24px;font-size:16.8px;color:#fff;font-weight:normal;">概要</div>
<svg class="a" style="left:24px;top:183.42px" width="17" height="17" viewBox="0 0 17 17"><rect x="1" y="1" width="13" height="15" rx="1.5" stroke="#fff" stroke-width="1.3" fill="none"/><path d="M3 5 l1.5 1.5 l2.5 -3 M3 10 l1.5 1.5 l2.5 -3" stroke="#fff" stroke-width="1.1" fill="none"/><path d="M8.5 4.5 h4" stroke="#fff" stroke-width="1.6"/><circle cx="12.5" cy="13" r="3.6" fill="#304156" stroke="#fff" stroke-width="1.3"/><path d="M12.3 11 v2.3 h1.8" stroke="#fff" stroke-width="1"/></svg>
<div class="a" style="left:65px;top:179.9px;line-height:24px;font-size:16.8px;color:#fff;font-weight:normal;">计划</div>
<svg class="a" style="left:141px;top:187.22px" width="12" height="7" viewBox="0 0 12 7"><path d="M0.7 0.7 L6 6 L11.3 0.7" stroke="#fff" stroke-width="1.2" fill="none"/></svg>
<svg class="a" style="left:24px;top:233.78px" width="17" height="17" viewBox="0 0 17 17"><path d="M3 12.5 A6 6 0 1 1 12.5 13.5" stroke="#fff" stroke-width="1.8" fill="none"/><path d="M1 9.5 l2 3.5 l3 -2.5" stroke="#fff" stroke-width="1.6" fill="none"/><path d="M2 15.5 h11" stroke="#fff" stroke-width="1.6"/><path d="M13 13 l3 2.5 l-3 2" fill="#fff"/></svg>
<div class="a" style="left:65px;top:230.3px;line-height:24px;font-size:16.8px;color:#fff;font-weight:normal;">迭代</div>
<svg class="a" style="left:24px;top:284.14px" width="17" height="17" viewBox="0 0 17 17"><path d="M1 2 h5 l1.5 2 h8.5 v12 h-15 z" stroke="#fff" stroke-width="1.3" fill="none"/><path d="M1 6 h15" stroke="#fff" stroke-width="1.3"/><rect x="3" y="12" width="2" height="3" fill="#fff"/><rect x="6.5" y="10.5" width="2" height="4.5" fill="#fff"/><rect x="10" y="9" width="2" height="6" fill="#fff"/><rect x="13" y="8" width="1.5" height="7" fill="#fff"/></svg>
<div class="a" style="left:65px;top:280.6px;line-height:24px;font-size:16.8px;color:#fff;font-weight:normal;">任务</div>
<svg class="a" style="left:24px;top:334.50px" width="17" height="17" viewBox="0 0 17 17"><g transform="rotate(-45 8.5 8.5)"><rect x="6.3" y="0" width="4.4" height="17" fill="#fff"/><path d="M6.3 2.3 h2.2 M6.3 4.8 h1.5 M6.3 12.2 h1.5 M6.3 14.7 h2.2" stroke="#304156" stroke-width="0.9"/></g><g transform="rotate(45 8.5 8.5)"><rect x="6.2" y="0.5" width="4.6" height="12.5" fill="#fff" stroke="#304156" stroke-width="0.9"/><path d="M6.2 13 L8.5 17.3 L10.8 13Z" fill="#fff"/><path d="M6.2 2.8 h4.6" stroke="#304156" stroke-width="0.9"/></g></svg>
<div class="a" style="left:65px;top:331.0px;line-height:24px;font-size:16.8px;color:#fff;font-weight:normal;">设计</div>
<svg class="a" style="left:141px;top:338.30px" width="12" height="7" viewBox="0 0 12 7"><path d="M0.7 0.7 L6 6 L11.3 0.7" stroke="#fff" stroke-width="1.2" fill="none"/></svg>
<svg class="a" style="left:24px;top:384.86px" width="17" height="17" viewBox="0 0 17 17"><path d="M5 4.5 L1.5 8.5 L5 12.5 M12 4.5 L15.5 8.5 L12 12.5 M10 3.5 L7 13.5" stroke="#fff" stroke-width="1.2" fill="none"/></svg>
<div class="a" style="left:65px;top:381.4px;line-height:24px;font-size:16.8px;color:#fff;font-weight:normal;">代码</div>
<svg class="a" style="left:24px;top:435.22px" width="17" height="17" viewBox="0 0 17 17"><path d="M3 1 h7 l4.5 4.5 v10 a1.5 1.5 0 0 1 -1.5 1.5 h-10 a1.5 1.5 0 0 1 -1.5 -1.5 v-13 a1 1 0 0 1 1.5 -1.5z" fill="#fff"/><path d="M4.5 10 h8 M4.5 12.8 h8" stroke="#304156" stroke-width="1.2"/></svg>
<div class="a" style="left:65px;top:431.7px;line-height:24px;font-size:16.8px;color:#fff;font-weight:normal;">文档</div>
<svg class="a" style="left:24px;top:485.58px" width="17" height="17" viewBox="0 0 17 17"><circle cx="8.5" cy="8.5" r="7.5" stroke="#fff" stroke-width="1.3" fill="none"/><circle cx="8.5" cy="6" r="2.2" stroke="#fff" stroke-width="1.1" fill="none"/><circle cx="6" cy="10.5" r="2.2" stroke="#fff" stroke-width="1.1" fill="none"/><circle cx="11" cy="10.5" r="2.2" stroke="#fff" stroke-width="1.1" fill="none"/></svg>
<div class="a" style="left:65px;top:482.1px;line-height:24px;font-size:16.8px;color:#fff;font-weight:normal;">集成</div>
<svg class="a" style="left:141px;top:489.38px" width="12" height="7" viewBox="0 0 12 7"><path d="M0.7 0.7 L6 6 L11.3 0.7" stroke="#fff" stroke-width="1.2" fill="none"/></svg>
<svg class="a" style="left:24px;top:535.94px" width="17" height="17" viewBox="0 0 17 17"><path d="M8.5 0.3 L16 2.8 C16 10 13.5 14 8.5 16.8 C3.5 14 1 10 1 2.8 Z" fill="#fff"/><path d="M2.6 4 L8.5 2 V8.5 H2.9 C2.7 7.2 2.6 5.8 2.6 4 Z" fill="#304156"/><path d="M8.5 8.5 H14.1 C13.6 11.3 12 13.6 8.5 15.1 Z" fill="#304156"/></svg>
<div class="a" style="left:65px;top:532.4px;line-height:24px;font-size:16.8px;color:#fff;font-weight:normal;">安全</div>
<svg class="a" style="left:141px;top:539.74px" width="12" height="7" viewBox="0 0 12 7"><path d="M0.7 0.7 L6 6 L11.3 0.7" stroke="#fff" stroke-width="1.2" fill="none"/></svg>
<svg class="a" style="left:24px;top:586.30px" width="17" height="17" viewBox="0 0 17 17"><path d="M5 1 h7 M6.3 1.2 v5 l-5.3 9.3 h15 l-5.3 -9.3 v-5" stroke="#fff" stroke-width="1.5" fill="none" stroke-linejoin="round"/><path d="M3.8 10.5 h9.4 l2.8 5 h-15z" fill="#fff"/><circle cx="7" cy="12.6" r="0.9" fill="#304156"/><circle cx="10.2" cy="13" r="0.9" fill="#304156"/></svg>
<div class="a" style="left:65px;top:582.8px;line-height:24px;font-size:16.8px;color:#fff;font-weight:normal;">测试</div>
<svg class="a" style="left:141px;top:590.10px" width="12" height="7" viewBox="0 0 12 7"><path d="M0.7 0.7 L6 6 L11.3 0.7" stroke="#fff" stroke-width="1.2" fill="none"/></svg>
<svg class="a" style="left:24px;top:636.66px" width="17" height="17" viewBox="0 0 17 17"><circle cx="8.5" cy="8.5" r="6" stroke="#fff" stroke-width="1.2" fill="none"/><path d="M8.5 0.5 v4 M8.5 12.5 v4 M0.5 8.5 h4 M12.5 8.5 h4" stroke="#fff" stroke-width="1.2"/></svg>
<div class="a" style="left:65px;top:633.2px;line-height:24px;font-size:16.8px;color:#fff;font-weight:normal;">部署</div>
<svg class="a" style="left:141px;top:640.46px" width="12" height="7" viewBox="0 0 12 7"><path d="M0.7 0.7 L6 6 L11.3 0.7" stroke="#fff" stroke-width="1.2" fill="none"/></svg>
<svg class="a" style="left:24px;top:687.02px" width="17" height="17" viewBox="0 0 17 17"><circle cx="4.3" cy="6" r="2.3" fill="#fff"/><circle cx="12.7" cy="6" r="2.3" fill="#fff"/><path d="M0.5 12.5 c0.3 -2.8 1.6 -3.8 3.8 -3.8 c2 0 3.3 1 3.6 3.8z M9.1 12.5 c0.3 -2.8 1.6 -3.8 3.6 -3.8 c2.2 0 3.5 1 3.8 3.8z" fill="#fff"/><circle cx="8.5" cy="6.3" r="2.7" fill="#fff" stroke="#304156" stroke-width="0.8"/><path d="M4.2 13.2 c0.3 -3.2 1.8 -4.3 4.3 -4.3 c2.5 0 4 1.1 4.3 4.3z" fill="#fff" stroke="#304156" stroke-width="0.8"/></svg>
<div class="a" style="left:65px;top:683.5px;line-height:24px;font-size:16.8px;color:#fff;font-weight:normal;">会议</div>
<svg class="a" style="left:24px;top:737.38px" width="17" height="17" viewBox="0 0 17 17"><rect x="1" y="1.2" width="15" height="10.8" rx="0.8" stroke="#fff" stroke-width="1.5" fill="none"/><path d="M1 12 h15 v1.5 h-15z" fill="#fff"/><path d="M6.5 13.5 L5.5 15.5 h6 L10.5 13.5z" fill="#fff"/><path d="M8.2 4 a3.3 3.3 0 1 0 3.3 3.3 h-3.3z" fill="#fff"/><path d="M9.3 2.9 a3.3 3.3 0 0 1 3.3 3.3 h-3.3z" fill="#fff"/></svg>
<div class="a" style="left:65px;top:733.9px;line-height:24px;font-size:16.8px;color:#fff;font-weight:normal;">报表</div>
<svg class="a" style="left:24px;top:787.74px" width="17" height="17" viewBox="0 0 17 17"><path d="M5.40 2.63 L6.95 1.79 L7.11 0.12 L9.89 0.12 L10.05 1.79 L11.60 2.63 L13.10 3.55 L14.63 2.86 L16.02 5.26 L14.65 6.24 L14.70 8.00 L14.65 9.76 L16.02 10.74 L14.63 13.14 L13.10 12.45 L11.60 13.37 L10.05 14.21 L9.89 15.88 L7.11 15.88 L6.95 14.21 L5.40 13.37 L3.90 12.45 L2.37 13.14 L0.98 10.74 L2.35 9.76 L2.30 8.00 L2.35 6.24 L0.98 5.26 L2.37 2.86 L3.90 3.55 Z" fill="#fff" stroke="#fff" stroke-width="0.8" stroke-linejoin="round"/><circle cx="8.5" cy="8" r="2.7" fill="#304156"/></svg>
<div class="a" style="left:65px;top:784.2px;line-height:24px;font-size:16.8px;color:#fff;font-weight:normal;">管理</div>
<svg class="a" style="left:141px;top:791.54px" width="12" height="7" viewBox="0 0 12 7"><path d="M0.7 0.7 L6 6 L11.3 0.7" stroke="#fff" stroke-width="1.2" fill="none"/></svg>
<div class="a" style="left:168px;top:6px;width:2391px;height:60px;background:#f2f5fa;border-bottom:1px solid #d9dce3"></div>
<div class="a" style="left:180px;top:24px;width:24px;height:3px;border-radius:1.5px;background:#000"></div>
<div class="a" style="left:180px;top:31.5px;width:24px;height:3px;border-radius:1.5px;background:#000"></div>
<div class="a" style="left:180px;top:39px;width:24px;height:3px;border-radius:1.5px;background:#000"></div>
<div class="a" style="left:228px;top:24.0px;line-height:24px;font-size:16.8px;color:#868686;font-weight:normal;">概要</div>
<svg class="a" style="left:432px;top:28px" width="20" height="14" viewBox="0 0 20 14"><path d="M1 7 C4 2 7 1 10 1 C13 1 16 2 19 7 C16 12 13 13 10 13 C7 13 4 12 1 7Z" stroke="#333" stroke-width="1.2" fill="none"/><circle cx="10" cy="7" r="3" stroke="#333" stroke-width="1.4" fill="none"/></svg>
<div class="a" style="left:456.5px;top:22.3px;line-height:26px;font-size:18.9px;color:#222;font-weight:normal;">项目：示例项目111</div>
<div class="a" style="left:1372px;top:23px;width:32px;height:32px;border-radius:50%;background:#9ccf72"></div>
<div class="a" style="left:1444px;top:23px;width:32px;height:32px;border-radius:50%;background:#5aa4f7"></div>
<div class="a" style="left:1393px;top:8px;width:22px;height:19px;border-radius:10px;background:#eb5a59;color:#fff;font-size:14px;line-height:19px;text-align:center">1</div>
<div class="a" style="left:1465px;top:8px;width:22px;height:19px;border-radius:10px;background:#eb5a59;color:#fff;font-size:14px;line-height:19px;text-align:center">4</div>
<div class="a" style="left:1515.5px;top:23px;width:32px;height:32px;border-radius:50%;background:#5f6268"></div>
<svg class="a" style="left:1515.5px;top:23px" width="32" height="32" viewBox="0 0 32 32"><path d="M12.2 12.6 C12.2 9.5 13.9 7.7 16.3 7.7 C19 7.7 20.9 9.4 20.9 11.7 C20.9 14.4 17.6 15.2 16.6 17.4 L16.6 19" stroke="#fff" stroke-width="2.9" fill="none" stroke-linecap="round"/><circle cx="16.4" cy="24" r="1.95" fill="#fff"/></svg>
<div class="a" style="left:1587.5px;top:23px;width:32px;height:32px;border-radius:50%;background:#5fbccb"></div>
<svg class="a" style="left:1587.5px;top:23px" width="32" height="32" viewBox="0 0 32 32"><g transform="rotate(-45 16 16)"><path d="M14 12.8 H9.8 a3.2 3.2 0 0 0 0 6.4 H14" stroke="#fff" stroke-width="2" fill="none"/><path d="M18 12.8 H22.2 a3.2 3.2 0 0 1 0 6.4 H18" stroke="#fff" stroke-width="2" fill="none"/><path d="M12.6 16 H19.4" stroke="#fff" stroke-width="2"/></g></svg>
<div class="a" style="left:1659.5px;top:23px;width:32px;height:32px;border-radius:50%;background:#e96f27"></div>
<svg class="a" style="left:1659.5px;top:23px" width="32" height="32" viewBox="0 0 32 32"><circle cx="16" cy="16" r="8.7" stroke="#fff" stroke-width="2.2" fill="none"/><g transform="rotate(-45 16.5 15.5)"><ellipse cx="16.5" cy="16.5" rx="3.6" ry="4.6" fill="#fff"/><circle cx="16.5" cy="11" r="1.8" fill="#fff"/><path d="M12 14 h-2 M12 17 h-2.2 M12 20 l-2 1 M21 14 h2 M21 17 h2.2 M21 20 l2 1" stroke="#fff" stroke-width="1.1"/></g><path d="M10 10 L22 22" stroke="#e96f27" stroke-width="3.6"/><path d="M10 10 L22 22" stroke="#fff" stroke-width="1.9"/></svg>
<div class="a" style="left:1721px;top:6px;width:120px;height:59px;background:#dddee3"></div>
<div class="a" style="left:1751px;top:23.5px;line-height:24px;font-size:16.8px;color:#555;font-weight:normal;">项目(群)</div>
<div class="a" style="left:1863px;top:23.5px;line-height:24px;font-size:16.8px;color:#555;font-weight:normal;">我的工作台</div>
<div class="a" style="left:1995.5px;top:23.5px;line-height:24px;font-size:16.8px;color:#555;font-weight:normal;">投产管理</div>
<div class="a" style="left:2119.5px;top:23.5px;line-height:24px;font-size:16.8px;color:#555;font-weight:normal;">安全管理</div>
<div class="a" style="left:2244px;top:23.5px;line-height:24px;font-size:16.8px;color:#555;font-weight:normal;">合版管理</div>
<div class="a" style="left:2368px;top:23.5px;line-height:24px;font-size:16.8px;color:#555;font-weight:normal;">平台管理</div>
<svg class="a" style="left:2478px;top:19px" width="27" height="34" viewBox="0 0 27 34">
<path d="M2 33 C3 28 7 26 13.5 26 C20 26 24 28 25 33 Z" fill="#e9eef0" stroke="#222" stroke-width="1"/>
<path d="M12 26 L13.5 33 L15 26Z" fill="#3e5c7a"/>
<ellipse cx="13.5" cy="14" rx="8" ry="9.5" fill="#f6d8a8" stroke="#222" stroke-width="1.1"/>
<path d="M5.5 13 C5 5 9 1.5 13.5 1.5 C18 1.5 22 5 21.5 13 C20 8 17 7 13.5 7.5 C10 7 7 8 5.5 13Z" fill="#8c7660" stroke="#222" stroke-width="1"/>
<rect x="3.5" y="12" width="2.5" height="4" rx="1" fill="#222"/><rect x="21" y="12" width="2.5" height="4" rx="1" fill="#222"/>
</svg>
<div class="a" style="left:2513px;top:24.0px;line-height:24px;font-size:16.8px;color:#555;font-weight:normal;">杜</div>
<svg class="a" style="left:2538px;top:32.4px" width="10" height="6.5" viewBox="0 0 10 6.5"><path d="M0 0 L10 0 L5 6.5Z" fill="#555"/></svg>
<div class="a" style="left:168px;top:66px;width:2391px;height:41px;background:#fff;border-bottom:1px solid #dfe2e8"></div>
<div class="a" style="left:186px;top:71px;width:89px;height:31px;border-radius:3px;background:#232c3d"></div>
<div class="a" style="left:197px;top:82.5px;width:9px;height:9px;border-radius:50%;background:#fff"></div>
<div class="a" style="left:212px;top:77.0px;line-height:20px;font-size:14.4px;color:#fff;font-weight:bold;">概要</div>
<svg class="a" style="left:252px;top:84px" width="8" height="8" viewBox="0 0 8 8"><path d="M1 1 L7 7 M7 1 L1 7" stroke="#fff" stroke-width="1.1"/></svg>
<div class="a" style="left:167.3px;top:220.9px;width:1195.6px;height:703.7px;border-style:solid;border-color:#fe1a0e;border-width:6px 6px 5.6px 5.4px;border-radius:6px"></div>
<div class="a" style="left:1053px;top:30px;width:456px;height:55px;border-radius:4px;background:#eaf7ed;border:1px solid #d5f0db"></div>
<svg class="a" style="left:1078px;top:50px" width="13" height="13" viewBox="0 0 13 13"><circle cx="6.5" cy="6.5" r="6.5" fill="#5fc86c"/><path d="M3.5 6.8 L5.6 8.8 L9.5 4.6" stroke="#fff" stroke-width="1.3" fill="none"/></svg>
<div class="a" style="left:1104px;top:44.5px;line-height:24px;font-size:16.8px;color:#5fc86c">操作成功</div>
</body></html>
